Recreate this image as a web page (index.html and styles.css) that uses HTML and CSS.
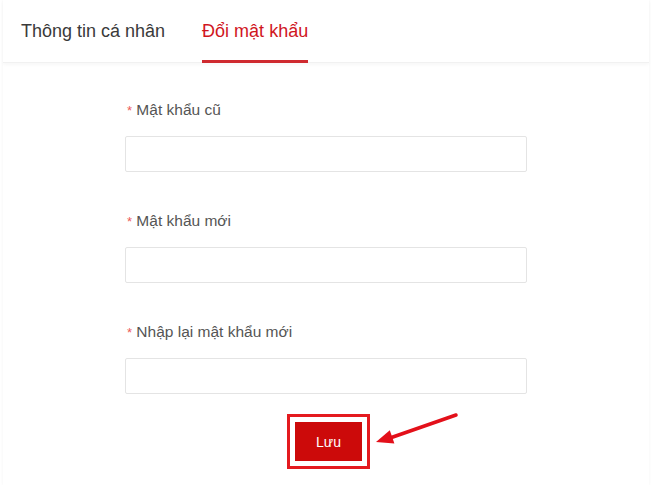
FILE: index.html
```html
<!DOCTYPE html>
<html lang="vi">
<head>
<meta charset="utf-8">
<title>Đổi mật khẩu</title>
<link rel="stylesheet" href="styles.css">
</head>
<body>
<div class="card">
  <nav class="tabs">
    <a class="tab">Thông tin cá nhân</a>
    <a class="tab active">Đổi mật khẩu</a>
  </nav>
  <form class="form">
    <div class="group">
      <label class="label"><span class="req">*</span> Mật khẩu cũ</label>
      <input class="input" type="password">
    </div>
    <div class="group">
      <label class="label"><span class="req">*</span> Mật khẩu mới</label>
      <input class="input" type="password">
    </div>
    <div class="group group-last">
      <label class="label"><span class="req">*</span> Nhập lại mật khẩu mới</label>
      <input class="input" type="password">
    </div>
    <div class="actions">
      <div class="highlight">
        <button class="btn" type="button">Lưu</button>
      </div>
      <svg class="arrow" width="95" height="45" viewBox="0 0 95 45">
        <line x1="86" y1="8" x2="20" y2="31" stroke="#e3101a" stroke-width="3.5" stroke-linecap="round"/>
        <polygon points="6,35 19.8,23.2 24.4,36.4" fill="#e3101a"/>
      </svg>
    </div>
  </form>
</div>
</body>
</html>
```
FILE: styles.css
```css
* { box-sizing: border-box; }
html, body { margin: 0; padding: 0; background: #fff; }
body {
  font-family: "Liberation Sans", Arial, sans-serif;
  width: 652px;
  height: 485px;
  overflow: hidden;
}
.card {
  margin: 0 3px;
  height: 485px;
  background: #fff;
  box-shadow: 0 0 3px rgba(0,0,0,0.05);
}
.tabs {
  display: flex;
  gap: 37px;
  padding-left: 18px;
  border-bottom: 1px solid #f1f1f1;
  box-shadow: 0 2px 3px rgba(0,0,0,0.03);
  height: 63px;
}
.tab {
  display: block;
  padding-top: 20px;
  font-size: 18px;
  line-height: 22px;
  color: #3a3a3a;
  height: 63px;
  border-bottom: 3px solid transparent;
}
.tab.active {
  color: #d0161e;
  border-bottom-color: #cf2a2f;
}
.form {
  display: flex;
  flex-direction: column;
  align-items: center;
  padding-top: 37px;
}
.group {
  width: 402px;
  display: flex;
  flex-direction: column;
  margin-bottom: 39px;
}
.group.group-last { margin-bottom: 20px; }
.label {
  font-size: 15.5px;
  line-height: 20px;
  color: #555;
  padding-left: 2px;
  margin-bottom: 15px;
}
.req { color: #ec5a5a; font-size: 13px; }
.input {
  width: 402px;
  height: 36px;
  border: 1px solid #e4e4e4;
  border-radius: 2px;
  background: #fff;
  margin: 0;
}
.actions {
  position: relative;
  width: 100%;
  display: flex;
  justify-content: center;
  padding-left: 5px;
}
.highlight {
  border: 3px solid #e41a1f;
  padding: 5px;
  width: 83px;
  height: 55px;
}
.btn {
  display: block;
  width: 67px;
  height: 39px;
  border: 0;
  background: #cc0a0a;
  color: #fff;
  font-family: "Liberation Sans", Arial, sans-serif;
  font-size: 14px;
  padding: 0;
}
.arrow {
  position: absolute;
  left: 367px;
  top: -7px;
}
```
